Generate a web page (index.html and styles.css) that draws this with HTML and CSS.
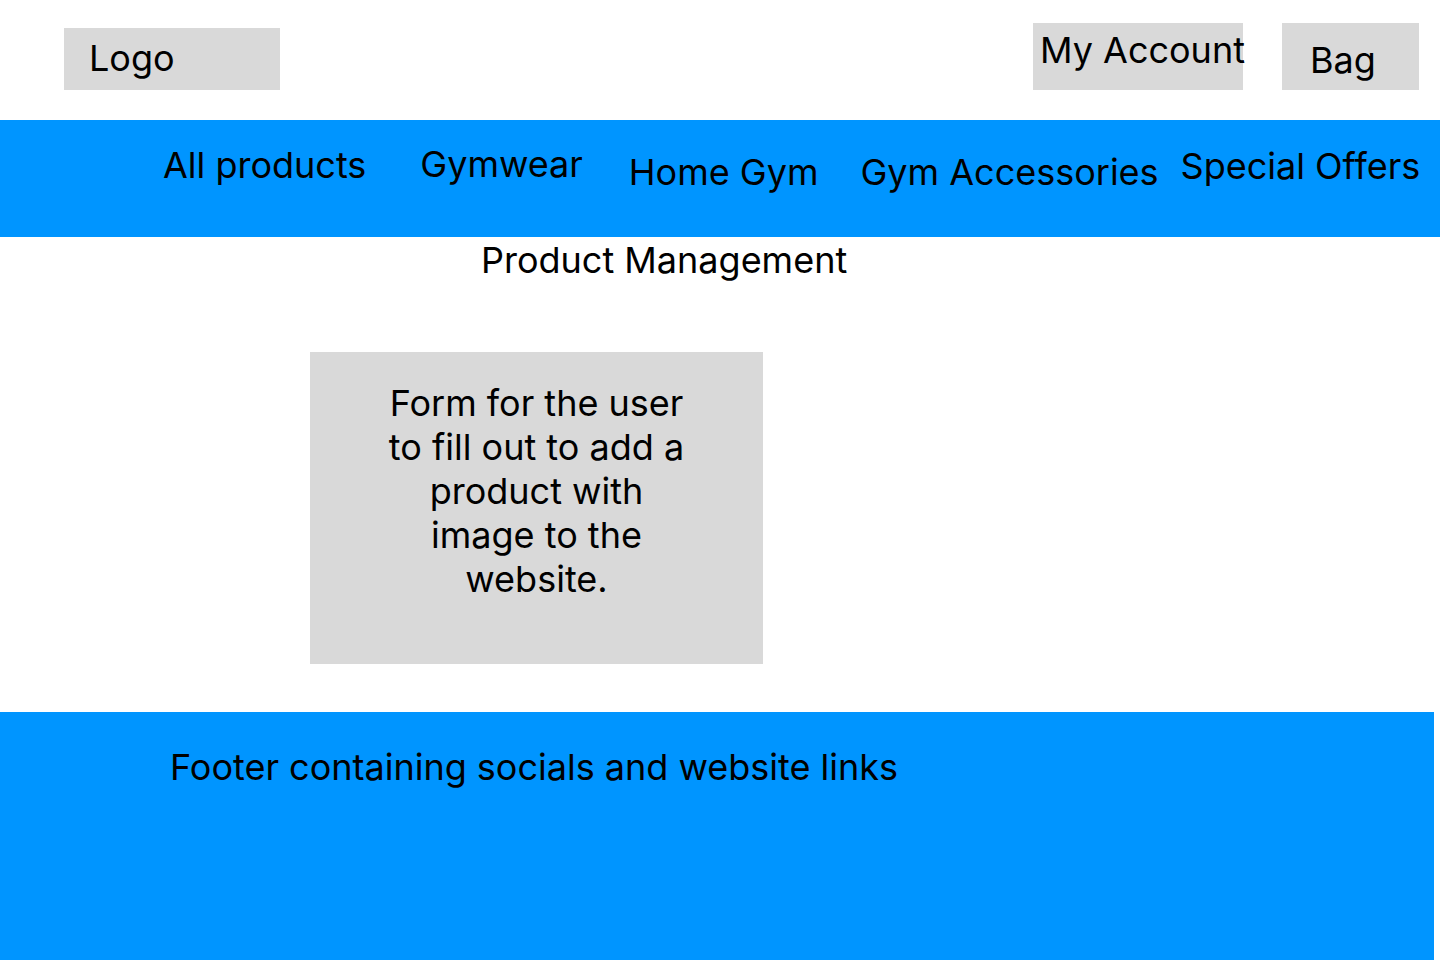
FILE: index.html
```html
<!DOCTYPE html>
<html lang="en">
<head>
<meta charset="utf-8">
<title>Product Management</title>
<link rel="stylesheet" href="styles.css">
</head>
<body>
<header class="top">
  <div class="box logo">Logo</div>
  <div class="actions">
    <div class="box account">My Account</div>
    <div class="box bag">Bag</div>
  </div>
</header>
<nav class="nav">
  <a class="nav-item all">All products</a>
  <a class="nav-item gymwear">Gymwear</a>
  <a class="nav-item home">Home Gym</a>
  <a class="nav-item acc">Gym Accessories</a>
  <a class="nav-item offers">Special Offers</a>
</nav>
<main class="main">
  <h1 class="title">Product Management</h1>
  <section class="form-box">
    <p>Form for the user<br>to fill out to add a<br>product with<br>image to the<br>website.</p>
  </section>
</main>
<footer class="footer">
  <p>Footer containing socials and website links</p>
</footer>
</body>
</html>
```
FILE: styles.css
```css
* { box-sizing: border-box; margin: 0; padding: 0; }
html, body { background: #ffffff; }
body {
  width: 1440px;
  height: 960px;
  overflow: hidden;
  font-family: Inter, "Noto Sans", sans-serif;
  font-size: 36px;
  line-height: 44px;
  color: #000000;
}
.box { background: #d9d9d9; white-space: nowrap; }

.top {
  height: 120px;
  display: flex;
  justify-content: space-between;
  align-items: flex-start;
}
.logo {
  margin: 28px 0 0 64px;
  width: 216px;
  height: 62px;
  padding: 8px 0 0 25px;
}
.actions {
  display: flex;
  gap: 39px;
  margin: 23px 21px 0 0;
}
.account {
  width: 210px;
  height: 67px;
  padding: 5px 0 0 7px;
}
.bag {
  width: 137px;
  height: 67px;
  padding: 15px 0 0 28px;
}

.nav {
  height: 117px;
  background: #0095ff;
  display: flex;
  align-items: flex-start;
  white-space: nowrap;
}
.nav-item { color: #000; text-decoration: none; }
.all { margin: 23px 0 0 163px; }
.gymwear { margin: 22px 0 0 54px; }
.home { margin: 30px 0 0 46px; }
.acc { margin: 30px 0 0 42px; }
.offers { margin: 24px 0 0 22px; }

.main {
  height: 475px;
  padding-top: 1px;
}
.title {
  font-size: 36px;
  font-weight: 400;
  line-height: 44px;
  margin-left: 481px;
}
.form-box {
  margin: 70px 0 0 310px;
  width: 453px;
  height: 312px;
  background: #d9d9d9;
  padding-top: 29px;
  text-align: center;
}

.footer {
  width: 1434px;
  height: 248px;
  background: #0095ff;
  padding: 33px 0 0 170px;
}
```
